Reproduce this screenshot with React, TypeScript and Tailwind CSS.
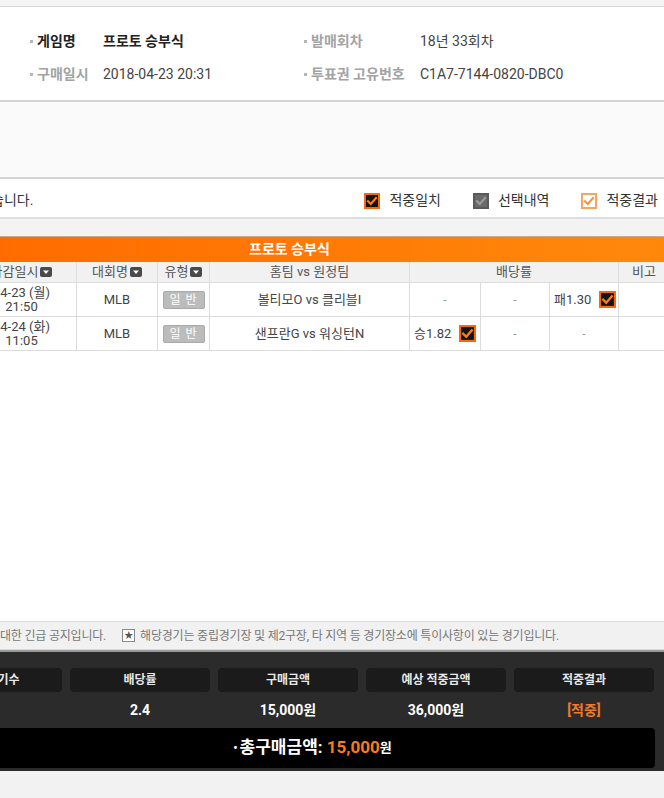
import React from "react";

type BoxKind = "hit" | "picked" | "result";

function CheckBox({ kind, size = 16 }: { kind: BoxKind; size?: number }) {
  const styles: Record<BoxKind, { bg: string; border: string; mark: string }> = {
    hit: { bg: "#141414", border: "#f36a10", mark: "#ff7b16" },
    picked: { bg: "#6a6a6a", border: "#5a5a5a", mark: "#9a9a9a" },
    result: { bg: "#ffffff", border: "#f8a45c", mark: "#f7963f" },
  };
  const s = styles[kind];
  return (
    <svg width={size} height={size} viewBox="0 0 16 16" className="shrink-0">
      <rect x="1" y="1" width="14" height="14" fill={s.bg} stroke={s.border} strokeWidth="2" />
      <path d="M4 8.2 L6.8 11 L12 5" fill="none" stroke={s.mark} strokeWidth="2.2" strokeLinecap="square" />
    </svg>
  );
}

function SortMark() {
  return (
    <svg width="12" height="10" viewBox="0 0 12 10" className="ml-[2px] inline-block shrink-0">
      <rect x="0" y="0" width="12" height="10" rx="2" fill="#4a4a4a" />
      <path d="M3 3.5 L9 3.5 L6 7 Z" fill="#ffffff" />
    </svg>
  );
}

function Bullet() {
  return <span className="mr-[4px] inline-block h-[3px] w-[3px] bg-[#b5b5b5]" />;
}

function InfoItem({ label, value, strong, labelWidth }: { label: string; value: string; strong?: boolean; labelWidth: string }) {
  return (
    <div className="flex items-center">
      <Bullet />
      <span className={`${labelWidth} whitespace-nowrap font-bold ${strong ? "text-[#222]" : "text-[#a3a3a3]"}`}>{label}</span>
      <span className={strong ? "font-bold text-[#222]" : "text-[#444]"}>{value}</span>
    </div>
  );
}

const cols = "grid grid-cols-[110px_81px_52px_200px_71px_69px_69px_80px]";

function Badge() {
  return (
    <span className="inline-flex h-[18px] w-[42px] items-center justify-center rounded-[2px] border border-[#a9a9a9] bg-[#bcbcbc] pl-[4px] text-[12px] tracking-[5px] text-white">
      일반
    </span>
  );
}

function Odd({ text, checked }: { text: string; checked?: boolean }) {
  if (!checked) {
    return <div className="flex items-center justify-center border-r border-[#dcdcdc] text-[12px] text-[#9a9a9a]">{text}</div>;
  }
  return (
    <div className="flex items-center gap-[8px] border-r border-[#dcdcdc] pl-[4px] text-[13px] text-[#444]">
      <span>{text}</span>
      <CheckBox kind="hit" size={17} />
    </div>
  );
}

function Row({ date, time, home, away, odds }: { date: string; time: string; home: string; away: string; odds: { text: string; checked?: boolean }[] }) {
  return (
    <div className={`${cols} h-[34px] border-b border-[#dcdcdc] bg-white`}>
      <div className="flex flex-col items-center justify-center border-r border-[#dcdcdc] text-[13px] leading-[14px] text-[#444]">
        <span>{date}</span>
        <span>{time}</span>
      </div>
      <div className="flex items-center justify-center border-r border-[#dcdcdc] text-[13px] text-[#444]">MLB</div>
      <div className="flex items-center justify-center border-r border-[#dcdcdc]">
        <Badge />
      </div>
      <div className="flex items-center justify-center border-r border-[#dcdcdc] text-[13px] text-[#444]">
        {home}&nbsp;vs&nbsp;{away}
      </div>
      {odds.map((o, i) => (
        <Odd key={i} text={o.text} checked={o.checked} />
      ))}
      <div />
    </div>
  );
}

function SummaryHead({ label }: { label: string }) {
  return (
    <div className="flex h-[24px] w-[140px] shrink-0 items-center justify-center rounded-[4px] bg-[#1b1b1b] text-[12px] font-bold text-[#e8e8e8]">
      {label}
    </div>
  );
}

function SummaryValue({ children, orange }: { children: React.ReactNode; orange?: boolean }) {
  return (
    <div className={`flex w-[140px] shrink-0 items-center justify-center text-[14px] font-bold ${orange ? "text-[#f07a2a]" : "text-white"}`}>
      {children}
    </div>
  );
}

export default function App() {
  return (
    <div
      className="h-[798px] w-[664px] overflow-hidden bg-[#f2f2f2]"
      style={{ fontFamily: "Roboto, 'Noto Sans CJK KR', sans-serif" }}
    >
      <div className="h-[7px] border-b border-[#d6d6d6] bg-[#f4f4f4]" />

      <div className="flex h-[93px] flex-col gap-[12px] bg-white pl-[30px] pt-[24px] text-[14px]">
        <div className="grid grid-cols-[274px_1fr]">
          <InfoItem label="게임명" value="프로토 승부식" strong labelWidth="w-[66px]" />
          <InfoItem label="발매회차" value="18년 33회차" labelWidth="w-[109px]" />
        </div>
        <div className="grid grid-cols-[274px_1fr]">
          <InfoItem label="구매일시" value="2018-04-23 20:31" labelWidth="w-[66px]" />
          <InfoItem label="투표권 고유번호" value="C1A7-7144-0820-DBC0" labelWidth="w-[109px]" />
        </div>
      </div>

      <div className="h-[79px] border-y-2 border-[#d3d3d3] bg-[#fafafa]" />

      <div className="flex h-[40px] items-center border-b-2 border-[#dedede] bg-white pt-[5px] text-[14px] text-[#333]">
        <span className="-ml-[9px]">습니다.</span>
        <div className="ml-auto flex items-center">
          <CheckBox kind="hit" />
          <span className="ml-[9px]">적중일치</span>
          <span className="ml-[32px]"><CheckBox kind="picked" /></span>
          <span className="ml-[9px]">선택내역</span>
          <span className="ml-[32px]"><CheckBox kind="result" /></span>
          <span className="ml-[9px] mr-[6px]">적중결과</span>
        </div>
      </div>

      <div className="h-[18px] border-b border-[#c9a98a] bg-[#f3f3f3]" />

      <div className="-ml-[33px] w-[732px]">
        <div className="flex h-[25px] items-center bg-gradient-to-r from-[#ff6a00] to-[#ff8a0c] pl-[282px] text-[14px] font-bold text-white">
          프로토 승부식
        </div>
        <div className={`${cols} h-[21px] border-b border-[#dcdcdc] bg-[#f1f1f1] text-[13px] text-[#555]`}>
          <div className="flex items-center justify-center border-r border-[#dcdcdc]">마감일시<SortMark /></div>
          <div className="flex items-center justify-center border-r border-[#dcdcdc]">대회명<SortMark /></div>
          <div className="flex items-center justify-center border-r border-[#dcdcdc]">유형<SortMark /></div>
          <div className="flex items-center justify-center border-r border-[#dcdcdc]">홈팀&nbsp;vs&nbsp;원정팀</div>
          <div className="col-span-3 flex items-center justify-center border-r border-[#dcdcdc]">배당률</div>
          <div className="flex items-center pl-[13px]">비고</div>
        </div>
        <Row date="04-23 (월)" time="21:50" home="볼티모O" away="클리블I" odds={[{ text: "-" }, { text: "-" }, { text: "패1.30", checked: true }]} />
        <Row date="04-24 (화)" time="11:05" home="샌프란G" away="워싱턴N" odds={[{ text: "승1.82", checked: true }, { text: "-" }, { text: "-" }]} />
      </div>

      <div className="h-[270px] bg-white" />

      <div className="flex h-[29px] items-center whitespace-nowrap border-y border-[#dadada] bg-[#f1f1f1] text-[12px] tracking-[-0.2px] text-[#777]">
        <span>대한 긴급 공지입니다.</span>
        <span className="ml-[16px] inline-flex h-[13px] w-[13px] items-center justify-center border border-[#888] bg-white text-[9px] leading-none text-[#555]">★</span>
        <span className="ml-[5px]">해당경기는 중립경기장 및 제2구장, 타 지역 등 경기장소에 특이사항이 있는 경기입니다.</span>
      </div>

      <div className="border-t-2 border-[#9a9a9a] bg-[#2b2b2b] pb-[3px] pt-[16px]">
        <div className="-ml-[78px] flex gap-[8px]">
          <SummaryHead label="선택경기수" />
          <SummaryHead label="배당률" />
          <SummaryHead label="구매금액" />
          <SummaryHead label="예상 적중금액" />
          <SummaryHead label="적중결과" />
        </div>
        <div className="-ml-[78px] flex h-[36px] gap-[8px]">
          <SummaryValue>2</SummaryValue>
          <SummaryValue>2.4</SummaryValue>
          <SummaryValue>15,000원</SummaryValue>
          <SummaryValue>36,000원</SummaryValue>
          <SummaryValue orange>[적중]</SummaryValue>
        </div>
        <div className="-ml-[30px] mr-[9px] flex h-[40px] items-center justify-center rounded-[4px] bg-black text-[17px] font-bold text-white">
          <span className="mr-[2px] text-[12px]">•</span>총구매금액:&nbsp;<span className="text-[#ff7a12]">15,000</span><span className="text-[13px]">원</span>
        </div>
      </div>
    </div>
  );
}
